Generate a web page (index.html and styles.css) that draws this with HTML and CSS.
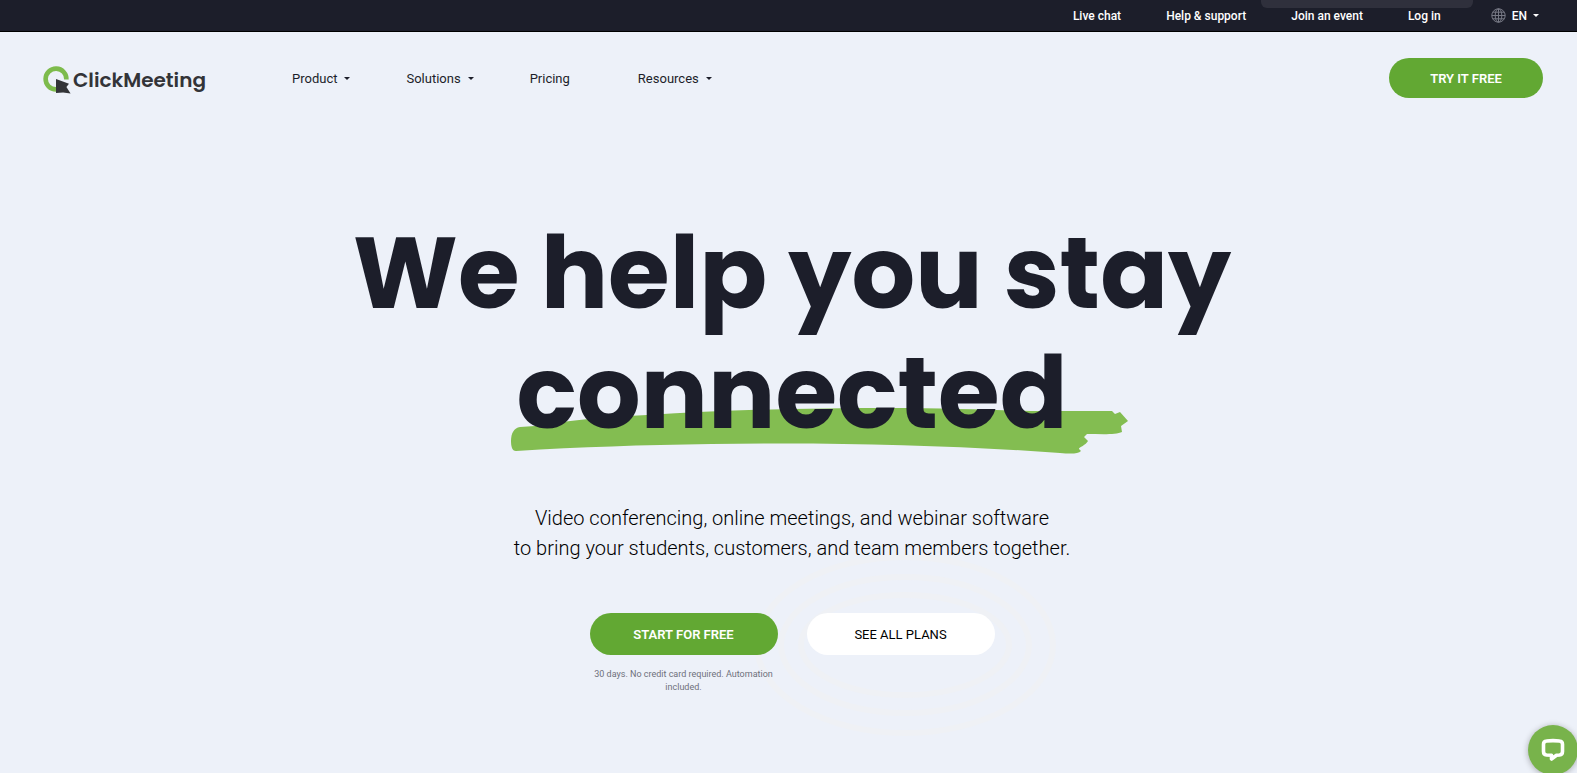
FILE: index.html
```
<!DOCTYPE html>
<html lang="en">
<head>
    <meta charset="UTF-8">
    <meta name="viewport" content="width=device-width, initial-scale=1.0">
    <title>ClickMeeting</title>
    <link rel="stylesheet" href="styles.css">
</head>
<body>

    <!-- Top bar -->
    <div class="top-bar">
        <a href="#">Live chat</a>
        <a href="#">Help &amp; support</a>
        <a href="#">Join an event</a>
        <a href="#">Log in</a>
        <button type="button" class="lang-button">
            <svg class="globe" viewBox="0 0 15 15" fill="none" stroke="currentColor" aria-hidden="true">
                <circle cx="7.5" cy="7.5" r="6.7"/>
                <ellipse cx="7.5" cy="7.5" rx="3.3" ry="6.7"/>
                <path d="M7.5 .8v13.4M.8 7.5h13.4M1.8 4.2h11.4M1.8 10.8h11.4"/>
            </svg>
            EN
            <span class="caret"></span>
        </button>
        <div class="top-tab"></div>
    </div>

    <header class="header">
        <a href="#" class="logo">
            <svg class="logo-icon" viewBox="0 0 28 28" aria-hidden="true">
                <path d="M13 23.4A10.4 10.4 0 1 1 23.4 13.5" fill="none" stroke="#7dbb4c" stroke-width="4.6"/>
                <path d="M13 13l13 4.700-2.600 3.300 4.200 6.600-7.500-1-7.100.4z" fill="#333438"/>
            </svg>
            ClickMeeting
        </a>
        <nav class="nav">
            <button type="button">Product <span class="caret"></span></button>
            <button type="button">Solutions <span class="caret"></span></button>
            <a href="#">Pricing</a>
            <button type="button">Resources <span class="caret"></span></button>
        </nav>
        <a href="#" class="button button-green button-small">TRY IT FREE</a>
    </header>

    <main class="hero">
        <h1>We help you stay<br>
            <span class="marked">
                <svg class="marker" viewBox="0 0 617 46" preserveAspectRatio="none" aria-hidden="true">
                    <path d="M0 33C0 25 3 20 9 19L24 18C50 14 85 9 136 7C210 2 290 0 379 0C430 0 480 2 520 3L601 3L604 6L609 4L617 13L610 18L611 24C605 27 590 26 576 26L573 29L577 33C575 37 567 40 568 41L570 43C567 46 560 46 549 45C440 37 320 34 200 36C130 37 70 39 5 43C1 43 0 38 0 33Z"/>
                </svg>
                connected
            </span>
        </h1>
        <p class="subtitle">Video conferencing, online meetings, and webinar software<br>to bring your students, customers, and team members together.</p>
        <div class="actions">
            <div class="action">
                <a href="#" class="button button-green">START FOR FREE</a>
                <p class="note">30 days. No credit card required. Automation included.</p>
            </div>
            <div class="action">
                <svg class="rings" viewBox="0 0 304 184" fill="none" stroke="#eff1f5" stroke-width="6" aria-hidden="true">
                    <ellipse cx="152" cy="92" rx="148" ry="88"/>
                    <ellipse cx="152" cy="92" rx="124" ry="68"/>
                    <ellipse cx="152" cy="92" rx="104" ry="50"/>
                </svg>
                <a href="#" class="button button-white">SEE ALL PLANS</a>
            </div>
        </div>
    </main>

    <button type="button" class="chat-button" aria-label="Open chat">
        <svg viewBox="0 0 24 24" aria-hidden="true">
            <path d="M5.500 3Q12 2.200 18.500 3 21.500 3.300 21.500 6.200V13.500Q21.500 16.600 18.500 17L15.500 17.300 10.500 21V17.300L5.500 17Q2.500 16.600 2.500 13.500V6.200Q2.500 3.300 5.500 3Z" fill="none" stroke="#fff" stroke-width="3.600" stroke-linejoin="round"/>
        </svg>
    </button>

</body>
</html>
```

FILE: styles.css
```
* {
    margin: 0;
    padding: 0;
    box-sizing: border-box;
}

body {
    font-family: Roboto, Arial, sans-serif;
    background-color: #edf1f9;
    color: #1c1e2a;
    min-height: 100vh;
}

a {
    color: inherit;
    text-decoration: none;
}

button {
    font: inherit;
    color: inherit;
    background: none;
    border: none;
    cursor: pointer;
}

/* Top bar */
.top-bar {
    position: relative;
    display: flex;
    justify-content: flex-end;
    align-items: center;
    gap: 45px;
    height: 32px;
    padding-right: 38px;
    background-color: #1c1e2a;
    border-bottom: 1px solid #000;
    color: #fff;
    font-size: 12px;
    font-weight: 500;
}

.top-tab {
    position: absolute;
    top: 0;
    right: 104px;
    width: 212px;
    height: 8px;
    background-color: #2f303c;
    border-radius: 0 0 6px 6px;
}

.lang-button {
    display: flex;
    align-items: center;
    gap: 6px;
    margin-left: 5px;
}

.globe {
    width: 15px;
    height: 15px;
    color: #777985;
}

.caret {
    border: 3px solid transparent;
    border-top-color: currentColor;
    border-bottom: none;
}

/* Header */
.header {
    display: flex;
    align-items: center;
    padding: 26px 34px 0 43px;
}

.logo {
    display: flex;
    align-items: center;
    gap: 2px;
    width: 249px;
    padding-top: 3px;
    font-family: Poppins, Inter, sans-serif;
    font-size: 20px;
    line-height: 28px;
    font-weight: 600;
    color: #333438;
}

.logo-icon {
    width: 28px;
    height: 28px;
}

.nav {
    display: flex;
    align-items: center;
    gap: 56px;
    flex: 1;
    font-size: 13px;
}

.nav a {
    padding-right: 12px;
}

.nav button {
    display: flex;
    align-items: center;
    gap: 7px;
}

.button {
    display: flex;
    justify-content: center;
    align-items: center;
    width: 188px;
    height: 42px;
    border-radius: 21px;
    font-size: 13px;
}

.button-small {
    width: 154px;
    height: 40px;
}

.button-green {
    background-color: #62a833;
    color: #fff;
    font-weight: 600;
}

.button-white {
    position: relative;
    background-color: #fff;
    color: #000;
}

/* Hero */
.hero {
    padding: 115px 0 0 7px;
    text-align: center;
}

h1 {
    font-family: Poppins, Inter, sans-serif;
    font-size: 100px;
    line-height: 120px;
    font-weight: 700;
}

.marked {
    display: inline-block;
    position: relative;
    z-index: 0;
}

/* Brush stroke under the word */
.marker {
    position: absolute;
    left: -5px;
    bottom: -1px;
    z-index: -1;
    width: 617px;
    height: 46px;
    fill: #83bd51;
}

.subtitle {
    margin-top: 50px;
    font-size: 20px;
    line-height: 30px;
    font-weight: 300;
    color: #000;
}

.actions {
    display: flex;
    justify-content: center;
    gap: 29px;
    margin-top: 50px;
}

.action {
    position: relative;
    width: 188px;
}

/* Faint ripple behind the second button */
.rings {
    position: absolute;
    top: -60px;
    left: -54px;
    z-index: -1;
    width: 304px;
    height: 184px;
}

.note {
    margin-top: 13px;
    font-size: 9px;
    line-height: 13px;
    color: #6d707b;
}

/* Chat widget */
.chat-button {
    position: fixed;
    right: -1px;
    bottom: -2px;
    display: flex;
    justify-content: center;
    align-items: center;
    width: 50px;
    height: 50px;
    border-radius: 50%;
    background-color: #78b34b;
    box-shadow: 0 1px 6px rgba(0, 0, 0, 0.3);
}

.chat-button svg {
    width: 24px;
    height: 24px;
}
```
